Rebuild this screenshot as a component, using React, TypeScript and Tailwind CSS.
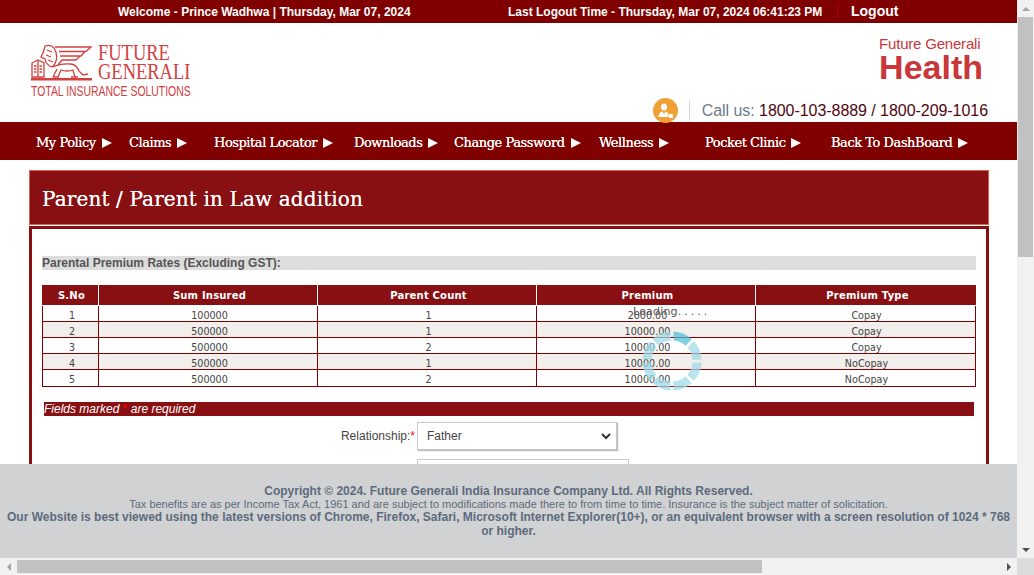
import React from 'react';

const navItems = [
  { label: 'My Policy', w: 'w-[93px]' },
  { label: 'Claims', w: 'w-[85px]' },
  { label: 'Hospital Locator', w: 'w-[140px]' },
  { label: 'Downloads', w: 'w-[100px]' },
  { label: 'Change Password', w: 'w-[145px]' },
  { label: 'Wellness', w: 'w-[106px]' },
  { label: 'Pocket Clinic', w: 'w-[126px]' },
  { label: 'Back To DashBoard', w: 'w-[150px]' },
];

const rates = [
  ['1', '100000', '1', '2000.00', 'Copay'],
  ['2', '500000', '1', '10000.00', 'Copay'],
  ['3', '500000', '2', '10000.00', 'Copay'],
  ['4', '500000', '1', '10000.00', 'NoCopay'],
  ['5', '500000', '2', '10000.00', 'NoCopay'],
];

const headers = ['S.No', 'Sum Insured', 'Parent Count', 'Premium', 'Premium Type'];
const colWidths = ['w-[56px]', 'w-[219px]', 'w-[219px]', 'w-[219px]', 'w-[221px]'];

const Lion = () => (
  <svg className="shrink-0" width="62" height="37" viewBox="0 0 62 37" fill="none" stroke="#d2403f" strokeWidth="1.3">
    {/* wing */}
    <path d="M24 3 H60 L55 7.5 H28 M54 7.5 L50 12 H29 M49 12 L45 16 H31 L27 21" />
    {/* head and mane */}
    <path d="M12 9 L14 2 Q20 0 23 4 Q27 10 25 17 Q24 21 21 23 Q15 21 14 15 L10 13 Z" />
    <path d="M16 6 L21 8 M15 11 L20 13 M17 16 L22 18" />
    {/* body */}
    <path d="M22 23 Q30 19 40 20 Q46 21 48 27 L52 31 L57 30 M22 33 L26 25 M44 33 L42 26 Q36 28 30 26 L27 33 M22 33 H28 M40 33 H47" />
    {/* book */}
    <path d="M1 19 L7 16 L13 19 V33 H1 Z M7 17 V33 M3 22 H5.5 M3 25 H5.5 M3 28 H5.5 M8.5 22 H11 M8.5 25 H11 M8.5 28 H11" />
    <rect x="0" y="34" width="61" height="2.5" fill="#d2403f" stroke="none" />
  </svg>
);

const Spinner = () => (
  <svg width="62" height="62" viewBox="-31 -31 62 62">
    {[0, 45, 90, 135, 180, 225, 270, 315].map((a, i) => (
      <path
        key={a}
        d="M 1.5 -29.6 A 29.6 29.6 0 0 1 19.8 -22 L 13.7 -15.2 A 20.5 20.5 0 0 0 1.5 -20.5 Z"
        fill={i === 0 ? '#4dbcd4' : '#9dd9e6'}
        fillOpacity={0.72}
        transform={`rotate(${a})`}
      />
    ))}
  </svg>
);

const App: React.FC = () => {
  return (
    <div className="relative w-[1034px] h-[575px] overflow-hidden bg-white" style={{ fontFamily: '"Liberation Sans", Arial, sans-serif' }}>
      <div className="w-[1017px] h-[558px] overflow-hidden">
        {/* Top bar */}
        <div className="flex items-center h-[23px] bg-[#800000] text-white font-bold text-[12px]">
          <span className="ml-[118px] w-[390px]">Welcome - Prince Wadhwa | Thursday, Mar 07, 2024</span>
          <span className="w-[329px]">Last Logout Time - Thursday, Mar 07, 2024 06:41:23 PM</span>
          <span className="w-px h-[13px] bg-[#b00000] mr-[13px]"></span>
          <span className="text-[14px]">Logout</span>
        </div>

        {/* Header */}
        <div className="flex justify-between h-[99px] bg-white">
          <div className="ml-[31px] mt-[21px] w-[165px]">
            <div className="flex items-end gap-[5px] h-[37px]">
              <Lion />
              <div className="text-[#d2403f] text-[24px] leading-[19px] scale-x-[0.77] origin-left" style={{ fontFamily: '"Liberation Serif", serif' }}>
                <div>FUTURE</div>
                <div>GENERALI</div>
              </div>
            </div>
            <div className="text-[#d2403f] text-[15px] leading-[15px] mt-[2px] whitespace-nowrap scale-x-[0.695] origin-left">TOTAL INSURANCE SOLUTIONS</div>
          </div>
          <div className="flex flex-col items-end mr-[29px]">
            <div className="mt-[12px] mr-[5px] text-[#c9373b]">
              <div className="text-[15px] leading-[17px] tracking-[-0.2px]">Future Generali</div>
              <div className="text-[34px] leading-[31px] font-bold">Health</div>
            </div>
            <div className="flex items-center mt-[15px]">
              <div className="flex items-center justify-center w-[25px] h-[25px] rounded-full bg-[#f0a035]">
                <svg width="17" height="17" viewBox="0 0 17 17" fill="#fff">
                  <ellipse cx="7" cy="5" rx="3" ry="3.6" />
                  <path d="M1.5 15 Q2 10 5.5 9.5 L7 12 L8.5 9.5 Q10.5 10 11.5 12 V15 Z" />
                  <rect x="12" y="12" width="4" height="4" rx="0.6" />
                </svg>
              </div>
              <span className="w-px h-[20px] bg-[#d5d5d5] ml-[11px] mr-[12px]"></span>
              <span className="text-[16px] text-[#6b7b8c] tracking-[-0.05px]">
                Call us: <span className="text-[#500510]">1800-103-8889 / 1800-209-1016</span>
              </span>
            </div>
          </div>
        </div>

        {/* Nav */}
        <div className="flex items-center h-[38px] bg-[#800000] pl-[36px] pt-[4px] text-white">
          {navItems.map((n) => (
            <div key={n.label} className={`flex items-center gap-[6px] whitespace-nowrap ${n.w}`} style={{ fontFamily: '"DejaVu Serif", serif' }}>
              <span className="tracking-[-0.45px] text-[13px] [text-shadow:0_0_0.6px_#ffffff]">{n.label}</span>
              <span className="w-0 h-0 border-y-[5px] border-y-transparent border-l-[10px] border-l-white"></span>
            </div>
          ))}
        </div>

        {/* Panel */}
        <div className="mx-[29px] mt-[10px] w-[960px]">
          <div className="flex items-center h-[55px] pl-[12px] pt-[3px] bg-[#880f12] border border-[#e0604f] text-white text-[20px] tracking-[0.13px] [text-shadow:0_0_0.6px_#ffffff]" style={{ fontFamily: '"DejaVu Serif", serif' }}>
            Parent / Parent in Law addition
          </div>
          <div className="mt-[1px] h-[300px] border-[3px] border-[#880f12] px-[10px] pt-[27px]">
            <div className="h-[14px] bg-[#dddddd] text-[12px] leading-[14px] font-bold text-[#555555]">Parental Premium Rates (Excluding GST):</div>

            <div className="mt-[15px] w-[934px]">
              <div className="flex h-[20px] bg-[#880f12] text-white text-[10px] font-bold tracking-[0.2px]" style={{ fontFamily: '"DejaVu Sans", sans-serif' }}>
                {headers.map((h, i) => (
                  <div key={h} className={`flex items-center justify-center pl-[3px] pt-[1px] border-r border-white last:border-r-0 ${i === 0 ? 'w-[57px]' : i === 4 ? 'w-[220px]' : colWidths[i]}`}>{h}</div>
                ))}
              </div>
              <div className="mt-px border-x border-b border-[#800000] text-[9.6px] text-[#444444]" style={{ fontFamily: '"DejaVu Sans", sans-serif' }}>
                {rates.map((r, ri) => (
                  <div key={r[0]} className={`flex h-[16px] border-b border-[#800000] last:border-b-0 ${ri % 2 === 1 ? 'bg-[#f1eeeb]' : 'bg-white'}`}>
                    {r.map((c, i) => (
                      <div key={i} className={`flex items-center justify-center pl-[3px] border-r border-[#800000] last:border-r-0 ${ri === 4 ? 'pt-[4px]' : 'pt-[5px]'} ${i === 0 ? 'w-[56px]' : i === 4 ? 'w-[218px]' : colWidths[i]}`}>{c}</div>
                    ))}
                  </div>
                ))}
              </div>
            </div>

            <div className="mt-[15px] mx-[2px] h-[14px] bg-[#880f12] text-white italic text-[12px] leading-[14px]">
              Fields marked <span className="text-[#ff0000] not-italic">*</span> are required
            </div>

            {/* Form */}
            <div className="flex items-center mt-[6px] h-[28px]">
              <label className="w-[375px] text-right text-[12px] text-[#444444] pr-[2px]">Relationship:<span className="text-[#e8101a]">*</span></label>
              <div className="flex items-center justify-between w-[200px] h-[28px] pl-[9px] pr-[4px] bg-white border border-[#c8c8c8] shadow-[1px_1px_1px_#bbbbbb] text-[12px] text-[#444444]">
                Father
                <svg width="12" height="12" viewBox="0 0 12 12" fill="none" stroke="#333" strokeWidth="2"><path d="M2 4 L6 8 L10 4" /></svg>
              </div>
            </div>
            <div className="mt-[9px] ml-[375px] w-[212px] h-[28px] border border-[#c8c8c8]"></div>
          </div>
        </div>
      </div>

      {/* Loading overlay */}
      <div className="absolute left-[633px] top-[304px] text-[11px] text-[#555555] tracking-[0.2px]" style={{ fontFamily: '"DejaVu Sans", sans-serif' }}>Loading<span className="tracking-[3px]">.....</span></div>
      <div className="absolute left-[641px] top-[330px]"><Spinner /></div>

      {/* Fixed footer */}
      <div className="absolute left-0 top-[464px] w-[1017px] h-[94px] bg-[#d1d2d4] pt-[20px] text-center text-[#5c6b7c] font-bold text-[12px] leading-[14px]">
        <div>Copyright © 2024. Future Generali India Insurance Company Ltd. All Rights Reserved.</div>
        <div className="font-normal text-[11px] leading-[12px]">Tax benefits are as per Income Tax Act, 1961 and are subject to modifications made there to from time to time. Insurance is the subject matter of solicitation.</div>
        <div className="leading-[14px]">Our Website is best viewed using the latest versions of Chrome, Firefox, Safari, Microsoft Internet Explorer(10+), or an equivalent browser with a screen resolution of 1024 * 768 or higher.</div>
      </div>

      {/* Browser scrollbars */}
      <div className="absolute right-0 top-0 flex flex-col items-center w-[17px] h-[558px] bg-[#f1f1f1]">
        <div className="h-[17px] flex items-center"><div className="w-0 h-0 border-x-[4px] border-x-transparent border-b-[4px] border-b-[#a3a3a3]"></div></div>
        <div className="w-[15px] h-[240px] bg-[#c1c1c1]"></div>
        <div className="mt-auto h-[17px] flex items-center"><div className="w-0 h-0 border-x-[4px] border-x-transparent border-t-[4px] border-t-[#505050]"></div></div>
      </div>
      <div className="absolute left-0 bottom-0 flex items-center w-[1017px] h-[17px] bg-[#f1f1f1]">
        <div className="flex items-center justify-center w-[17px]"><div className="w-0 h-0 border-y-[4px] border-y-transparent border-r-[4px] border-r-[#a3a3a3]"></div></div>
        <div className="w-[745px] h-[13px] bg-[#c1c1c1]"></div>
        <div className="ml-auto flex items-center justify-center w-[17px]"><div className="w-0 h-0 border-y-[4px] border-y-transparent border-l-[4px] border-l-[#505050]"></div></div>
      </div>
      <div className="absolute right-0 bottom-0 w-[17px] h-[17px] bg-[#dcdcdc]"></div>
    </div>
  );
};

export default App;
